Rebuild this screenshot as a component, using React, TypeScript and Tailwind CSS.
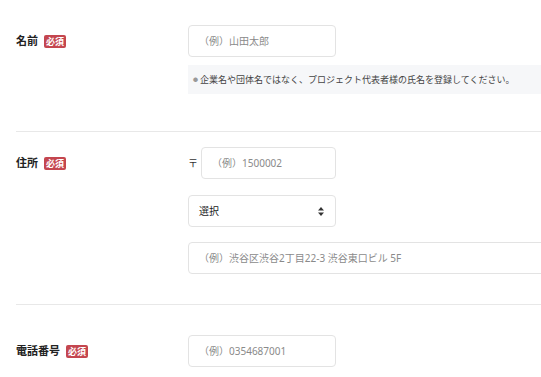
import React from "react";

const font = {
  fontFamily: '"Noto Sans", "Noto Sans CJK JP", sans-serif',
};

function Badge() {
  return (
    <span className="ml-[6px] inline-flex h-[13px] items-center rounded-[2px] bg-[#c4464f] px-[2px] text-[9px] font-bold leading-none text-white">
      必須
    </span>
  );
}

function Label({ text }: { text: string }) {
  return (
    <div className="flex w-[188px] shrink-0 items-center pl-4">
      <span className="text-[11px] font-bold text-[#222]">{text}</span>
      <Badge />
    </div>
  );
}

function TextInput({ placeholder, className }: { placeholder: string; className: string }) {
  return (
    <div
      className={`flex h-[32px] items-center rounded-[4px] border border-[#e3e3e3] bg-white px-[10px] text-[10px] text-[#8a8a8a] ${className}`}
    >
      {placeholder}
    </div>
  );
}

export default function App() {
  return (
    <div className="h-[377px] w-[541px] overflow-hidden bg-white" style={font}>
      {/* 名前 */}
      <div className="pt-[25px]">
        <div className="flex items-center">
          <Label text="名前" />
          <TextInput placeholder="（例）山田太郎" className="w-[148px]" />
        </div>
        <div className="ml-[188px] mt-[8px] flex h-[29px] w-[380px] items-center bg-[#f6f7f9] pl-[5px] text-[9px] text-[#444]">
          <span className="mr-[2px] text-[5px] text-[#999]">●</span>
          企業名や団体名ではなく、プロジェクト代表者様の氏名を登録してください。
        </div>
      </div>

      <div className="ml-4 mt-[37px] h-px bg-[#e8e8e8]" />

      {/* 住所 */}
      <div className="pt-[15px]">
        <div className="flex items-center">
          <Label text="住所" />
          <span className="w-[13px] text-[10px] text-[#333]">〒</span>
          <TextInput placeholder="（例）1500002" className="w-[135px]" />
        </div>
        <div className="ml-[188px] mt-[16px] flex h-[32px] w-[148px] items-center justify-between rounded-[4px] border border-[#e3e3e3] bg-white pl-[10px] pr-[11px] text-[10px] text-[#222]">
          <span>選択</span>
          <svg width="6" height="9" viewBox="0 0 6 9">
            <path d="M3 0 L6 3.5 L0 3.5 Z" fill="#333" />
            <path d="M3 9 L6 5.5 L0 5.5 Z" fill="#333" />
          </svg>
        </div>
        <TextInput
          placeholder="（例）渋谷区渋谷2丁目22-3 渋谷東口ビル 5F"
          className="ml-[188px] mt-[15px] w-[380px]"
        />
      </div>

      <div className="ml-4 mt-[30px] h-px bg-[#e8e8e8]" />

      {/* 電話番号 */}
      <div className="pt-[30px]">
        <div className="flex items-center">
          <Label text="電話番号" />
          <TextInput placeholder="（例）0354687001" className="w-[148px]" />
        </div>
      </div>
    </div>
  );
}
